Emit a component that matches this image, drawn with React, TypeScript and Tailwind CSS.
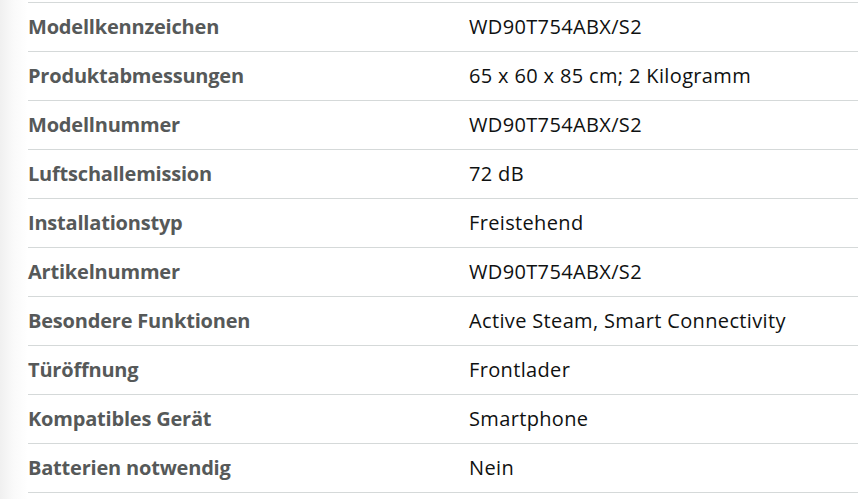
import React from "react";

const rows: [string, string][] = [
  ["Modellkennzeichen", "WD90T754ABX/S2"],
  ["Produktabmessungen", "65 x 60 x 85 cm; 2 Kilogramm"],
  ["Modellnummer", "WD90T754ABX/S2"],
  ["Luftschallemission", "72 dB"],
  ["Installationstyp", "Freistehend"],
  ["Artikelnummer", "WD90T754ABX/S2"],
  ["Besondere Funktionen", "Active Steam, Smart Connectivity"],
  ["Türöffnung", "Frontlader"],
  ["Kompatibles Gerät", "Smartphone"],
  ["Batterien notwendig", "Nein"],
];

export default function App() {
  return (
    <div className="w-[858px] h-[499px] bg-white flex overflow-hidden" style={{ fontFamily: '"Open Sans", "Noto Sans", sans-serif' }}>
      <div className="w-[28px] shrink-0 bg-gradient-to-r from-[#f0f0f0] via-[#fafafa] to-white" />
      <div className="flex-1 pt-[2px]">
        {rows.map(([k, v]) => (
          <div key={k} className="flex items-center h-[49px] border-t border-[#d5d9d9]">
            <div className="w-[441px] shrink-0 text-[20px] leading-[28px] font-bold tracking-[-0.2px] text-[#565959]">{k}</div>
            <div className="text-[20px] leading-[28px] tracking-[0.35px] text-[#0f1111]">{v}</div>
          </div>
        ))}
        <div className="border-t border-[#d5d9d9]" />
      </div>
    </div>
  );
}
